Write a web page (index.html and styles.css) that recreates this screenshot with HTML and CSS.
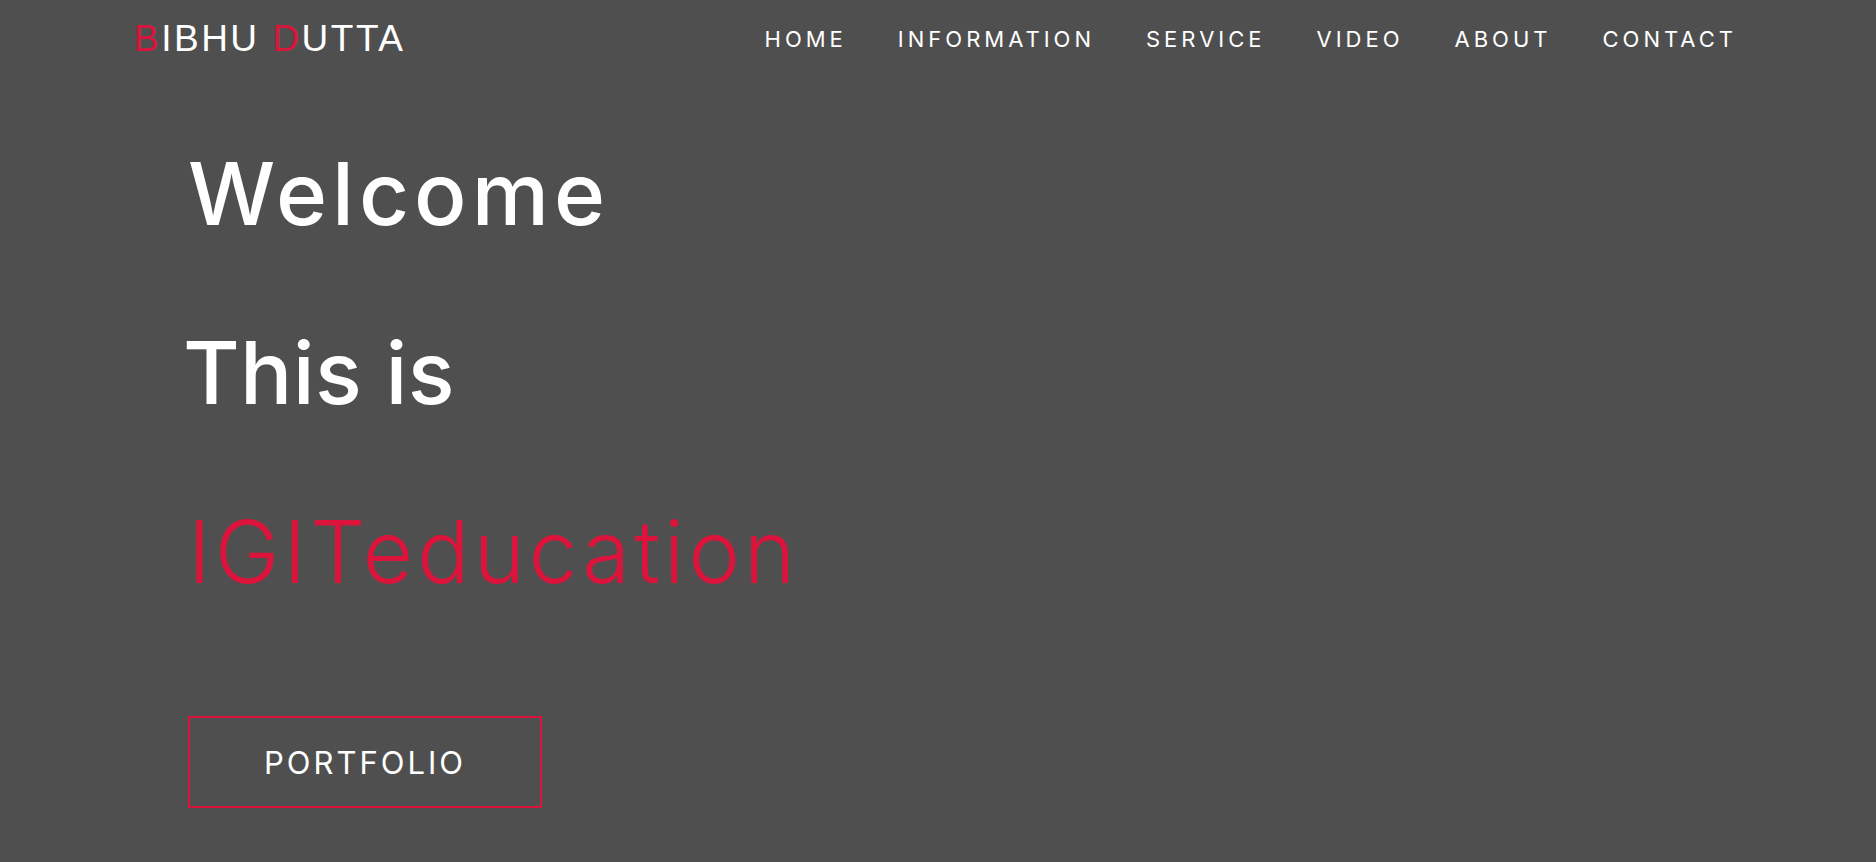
FILE: index.html
```html
<!DOCTYPE html>
<html lang="en">
<head>
<meta charset="utf-8">
<title>Bibhu Dutta</title>
<link rel="stylesheet" href="styles.css">
</head>
<body>
<header class="topbar">
  <a class="logo" href="#"><span class="accent">B</span>IBHU <span class="accent">D</span>UTTA</a>
  <nav class="menu">
    <a href="#">HOME</a>
    <a href="#">INFORMATION</a>
    <a href="#">SERVICE</a>
    <a href="#">VIDEO</a>
    <a href="#">ABOUT</a>
    <a href="#">CONTACT</a>
  </nav>
</header>
<main class="hero">
  <h1 class="line welcome">Welcome</h1>
  <h1 class="line intro">This is</h1>
  <h1 class="line brand">IGITeducation</h1>
  <a class="btn" href="#">PORTFOLIO</a>
</main>
</body>
</html>
```
FILE: styles.css
```css
* { box-sizing: border-box; }
html, body { margin: 0; padding: 0; }
body {
  background: #4f4f4f;
  color: #ffffff;
  font-family: Inter, "Noto Sans", sans-serif;
  height: 862px;
  overflow: hidden;
}
a { color: inherit; text-decoration: none; }

.topbar {
  display: flex;
  align-items: center;
  justify-content: space-between;
  height: 77px;
  padding: 0 139px 0 134px;
}
.logo {
  font-family: "Liberation Sans", Arial, sans-serif;
  font-size: 37px;
  letter-spacing: 2.5px;
  color: #fff;
}
.accent { color: #dc143c; }
.menu {
  display: flex;
  gap: 51px;
}
.menu a {
  font-size: 22px;
  font-weight: 400;
  letter-spacing: 4px;
}

.hero {
  padding: 27px 0 0 188px;
  display: flex;
  flex-direction: column;
  align-items: flex-start;
}
.line {
  margin: 0;
  font-size: 87px;
  line-height: 179px;
  font-weight: 500;
}
.welcome { letter-spacing: 5px; }
.intro { letter-spacing: 0.3px; margin-left: -5px; }
.brand {
  color: #dc143c;
  font-weight: 300;
  letter-spacing: 4px;
}
.btn {
  margin-top: 75px;
  width: 354px;
  height: 92px;
  border: 2px solid #dc143c;
  display: flex;
  align-items: center;
  justify-content: center;
  font-size: 31px;
  letter-spacing: 3px;
}
```
